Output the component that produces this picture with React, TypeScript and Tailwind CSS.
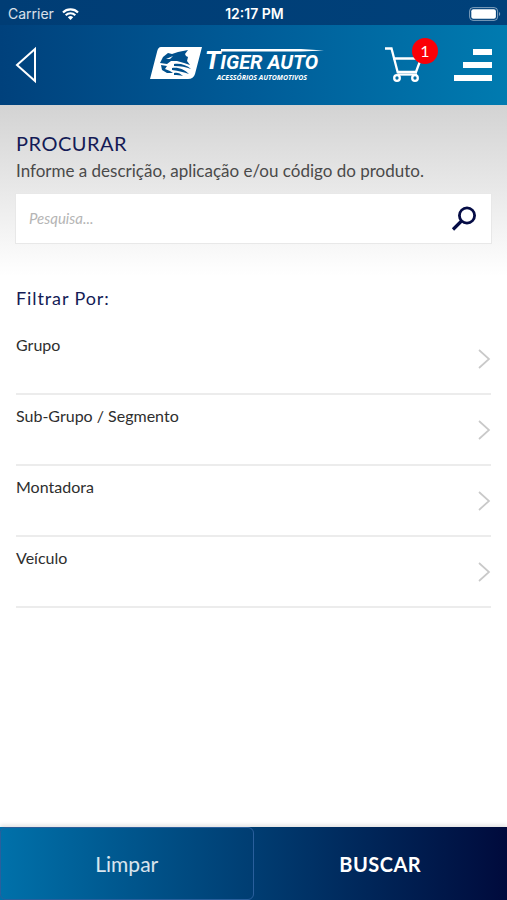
import { useState } from 'react';

const filters = ['Grupo', 'Sub-Grupo / Segmento', 'Montadora', 'Veículo'];

function StatusBar() {
  return (
    <div className="grid h-[25px] grid-cols-3 items-center bg-gradient-to-r from-[#003d75] to-[#00417a] pt-[2px] pr-[6px] pl-2 font-['Inter',sans-serif] text-sm text-white">
      <div className="flex items-center gap-2">
        <span className="text-white/85">Carrier</span>
        <svg className="h-3 w-[17px]" viewBox="0 0 17 12" fill="none" stroke="white" strokeWidth="2.2">
          <path d="M1 4.4C5 .3 12 .3 16 4.4" />
          <path d="M3.7 7.2c2.7-2.6 6.9-2.6 9.6 0" />
          <path d="M5.8 9.2a3.9 3.9 0 0 1 5.4 0L8.5 12z" fill="white" stroke="none" />
        </svg>
      </div>
      <span className="text-center font-semibold">12:17 PM</span>
      <svg className="h-[14px] w-8 justify-self-end" viewBox="0 0 32 14" fill="none">
        <rect x=".6" y=".6" width="28" height="12.8" rx="3.5" stroke="white" strokeOpacity=".5" />
        <rect x="2.3" y="2.3" width="24.6" height="9.4" rx="2" fill="white" />
        <path d="M30 5c1.6.6 1.6 3.4 0 4z" fill="white" fillOpacity=".5" />
      </svg>
    </div>
  );
}

function Logo() {
  return (
    <div className="flex items-start gap-[2px] text-white">
      <svg className="h-8 w-[53px]" viewBox="0 0 53 32">
        <path d="M11 0H52L45 27Q43.500 32 38 32H0L7 5Q8 0 11 0Z" fill="white" />
        <g fill="#00508d">
          <path d="M11 14L13 10 18 6 22 7 28 5 38 3 35 7 36 9 38 10 37 14 40 18 34 16 27 14 21 14 17 17 10 16Z" />
          <path d="M11 18L17 19 15 22 20 24 23 26 17 26 12 23Z" />
          <path d="M24 17C30 16 37 18 41 22 36 20 31 19 24 19ZM22 21C29 20 35 23 39 27 34 25 29 24 22 23ZM24 26C27 25 30 26 33 29 30 28 27 28 24 28Z" />
        </g>
        <path d="M16 12L23 9 20 12Z" fill="white" />
      </svg>
      <div className="relative w-[119px] italic">
        <svg className="absolute top-[2px] left-4 h-1 w-[103px]" viewBox="0 0 103 4" fill="white">
          <path d="M0 0H80L103 1.500 80 2.500H0Z" />
        </svg>
        <div className="flex h-[26px] items-baseline font-['Roboto',sans-serif] leading-[26px] font-bold whitespace-nowrap">
          <span className="text-[26px]">T</span>
          <span className="text-xl leading-5">IGER AUTO</span>
        </div>
        <div className="pl-3 font-['Open_Sans',sans-serif] text-[7px] leading-[10px] font-bold whitespace-nowrap">
          ACESSÓRIOS AUTOMOTIVOS
        </div>
      </div>
    </div>
  );
}

function Header() {
  return (
    <header className="grid h-20 grid-cols-[4fr_auto_5fr] items-center bg-gradient-to-r from-[#00417c] via-[#005c98] to-[#007bb0] px-[15px]">
      <button aria-label="Voltar" className="justify-self-start">
        <svg className="h-[38px] w-[22px]" viewBox="0 0 22 38" fill="none" stroke="white" strokeWidth="2">
          <path d="M20 3V35L2 19Z" />
        </svg>
      </button>
      <Logo />
      <div className="flex items-center gap-4 justify-self-end">
        <button aria-label="Carrinho" className="relative">
          <svg className="h-[38px] w-[54px]" viewBox="0 0 54 38" fill="none" stroke="white" strokeWidth="2.300">
            <path d="M1 2.500H7.500L14 27.500M9 12.500H37L32 26H13" />
            <path d="M14 28.500H33" />
            <circle cx="13" cy="32" r="2.800" />
            <circle cx="31" cy="32" r="2.800" />
          </svg>
          <span className="absolute -top-2 right-0 flex size-[26px] items-center justify-center rounded-full bg-[#fb0007] text-base text-white">
            1
          </span>
        </button>
        <button aria-label="Menu" className="flex flex-col items-end gap-[7px]">
          <span className="h-[6px] w-[19px] bg-white" />
          <span className="h-[6px] w-[29px] bg-white" />
          <span className="h-[6px] w-[38px] bg-white" />
        </button>
      </div>
    </header>
  );
}

export default function App() {
  const [query, setQuery] = useState('');

  return (
    <div className="flex min-h-screen flex-col bg-white font-['Lato',sans-serif]">
      <StatusBar />
      <Header />

      <main className="flex-1">
        {/* Search */}
        <section className="bg-gradient-to-b from-[#d3d3d3] to-white px-[15px] pt-[26px] pb-8">
          <h1 className="pl-px text-xl leading-6 tracking-wide text-[#141b56]">PROCURAR</h1>
          <label htmlFor="search" className="block pt-1 pl-px text-[17px] leading-6 text-[#4a4a4a]">
            Informe a descrição, aplicação e/ou código do produto.
          </label>
          <form className="mt-[10px] flex h-[51px] border border-[#e8e8e8] bg-white" onSubmit={(e) => e.preventDefault()}>
            <input
              id="search"
              type="text"
              value={query}
              onChange={(e) => setQuery(e.target.value)}
              placeholder="Pesquisa..."
              className="min-w-0 flex-1 px-[13px] text-[15px] italic outline-none placeholder:text-[#b5b5b5]"
            />
            <button type="submit" aria-label="Pesquisar" className="flex w-[54px] items-center justify-center">
              <svg className="size-[26px]" viewBox="0 0 26 26" fill="none" stroke="#050c45" strokeWidth="2.800">
                <circle cx="16" cy="9.500" r="7.600" />
                <path d="M10.500 15L2 23.500" strokeWidth="3.200" />
              </svg>
            </button>
          </form>
        </section>

        {/* Filters */}
        <section className="px-4 pt-[10px]">
          <h2 className="text-lg leading-6 tracking-wider text-[#141b56]">Filtrar Por:</h2>
          <ul className="pt-[14px]">
            {filters.map((filter) => (
              <li key={filter}>
                <button className="flex h-[71px] w-full items-center justify-between border-b-2 border-[#ececec] text-left">
                  <span className="self-start pt-[11px] text-base leading-5 text-[#2e2e2e]">{filter}</span>
                  <svg className="h-[22px] w-[14px]" viewBox="0 0 14 22" fill="none" stroke="#c9c9c9" strokeWidth="1.700">
                    <path d="M2 2L12 11 2 20" />
                  </svg>
                </button>
              </li>
            ))}
          </ul>
        </section>
      </main>

      <footer className="grid h-[73px] grid-cols-2 bg-gradient-to-r from-[#0071aa] via-[#003d72] to-[#000a3c] text-white shadow-[0_-2px_4px_rgba(0,0,0,0.12)]">
        <button className="rounded-md border border-[#2a5f9c] text-[21px] text-white/85">Limpar</button>
        <button className="text-xl font-bold tracking-wide">BUSCAR</button>
      </footer>
    </div>
  );
}
